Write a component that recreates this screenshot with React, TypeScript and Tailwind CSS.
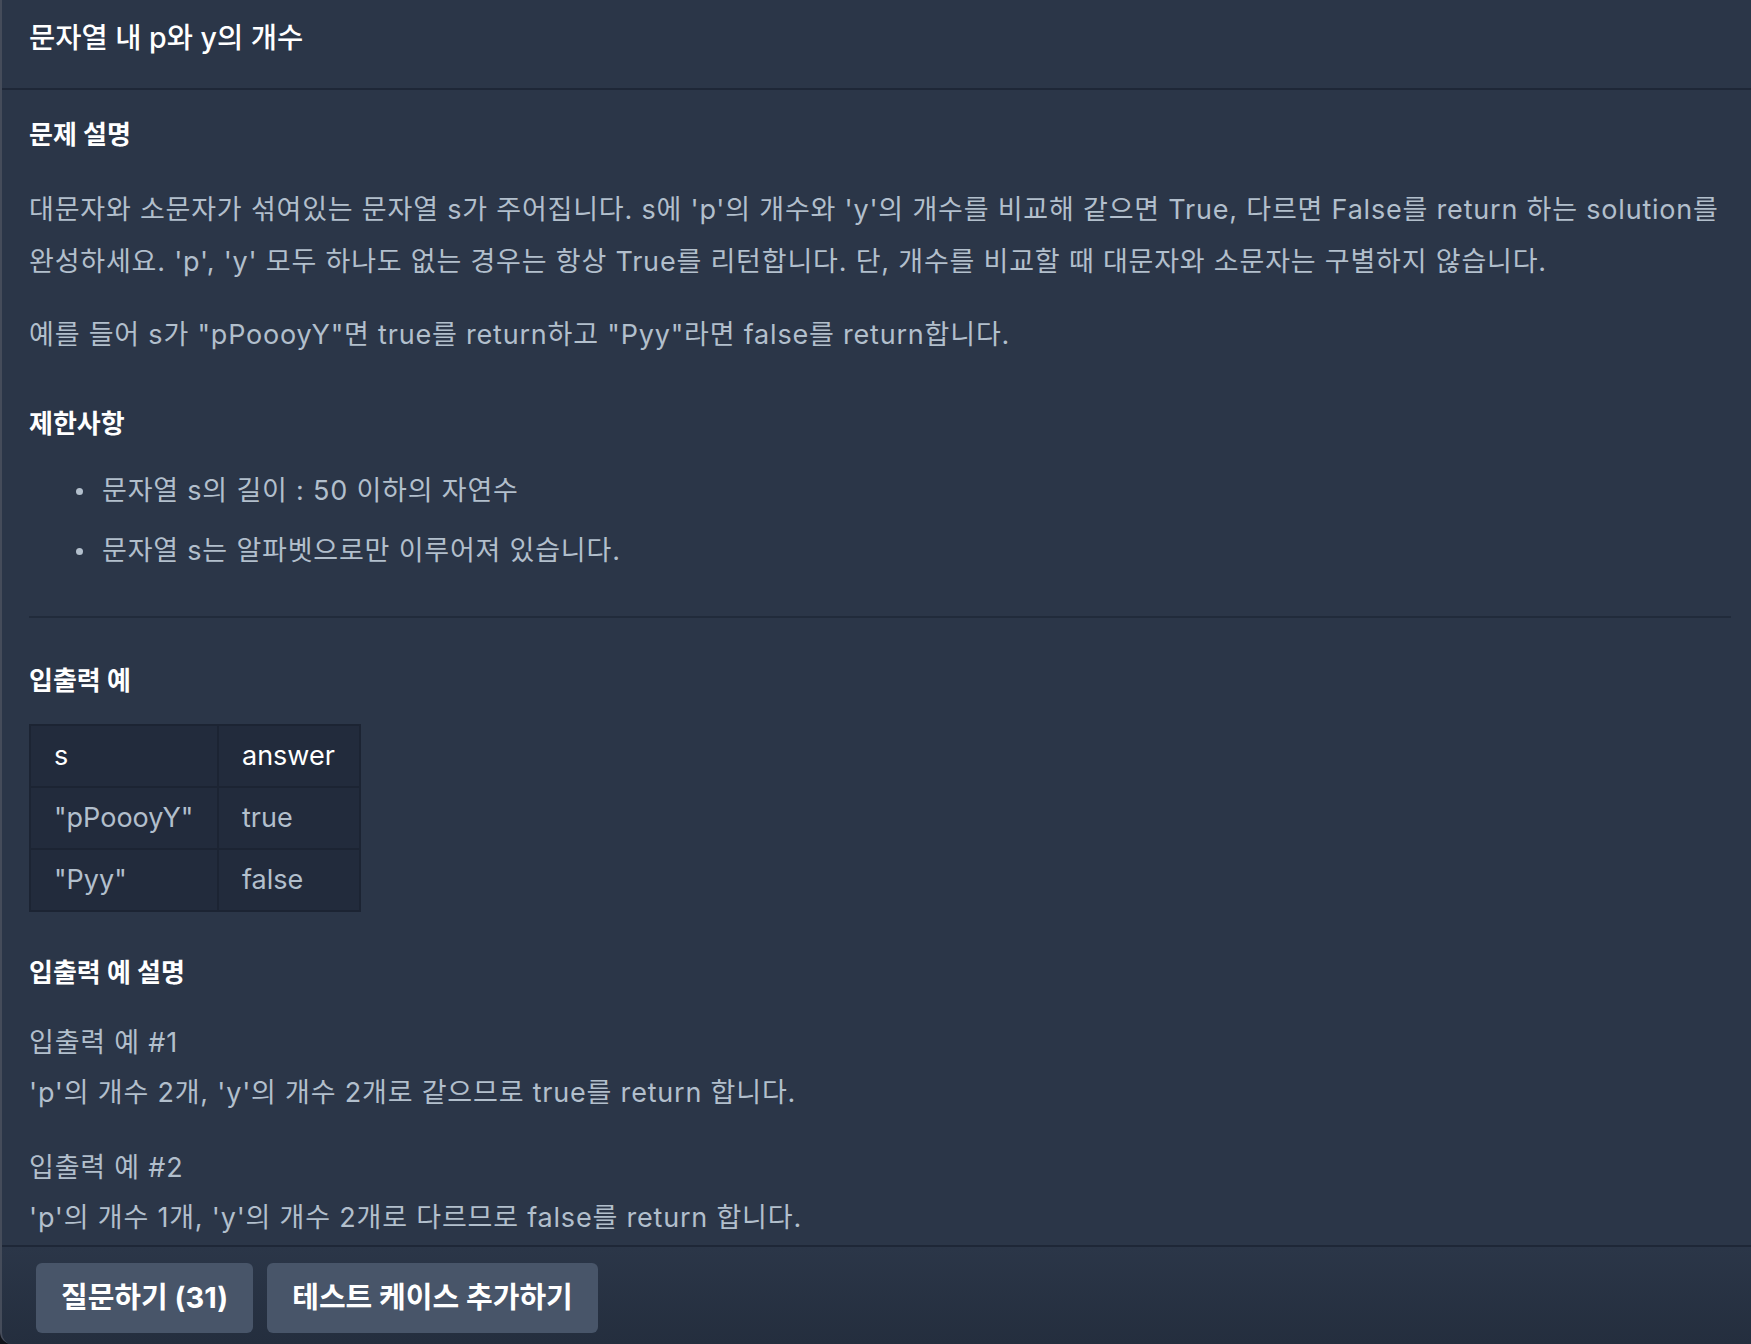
import React from "react";

const FONT = { fontFamily: 'Inter, "Noto Sans CJK KR", sans-serif' };

export default function App() {
  return (
    <div className="w-[1751px] h-[1344px] bg-[#10131a] overflow-hidden" style={FONT}>
      <div className="h-[1344px] flex flex-col bg-[#2b3648] border-l-2 border-[#454c5a] rounded-bl-[12px] overflow-hidden">
        {/* Header */}
        <div className="h-[90px] shrink-0 border-b-2 border-[#1e2737] pl-[27px] pt-[19px]">
          <div className="text-[28.5px] leading-[38px] font-medium text-white">문자열 내 p와 y의 개수</div>
        </div>

        {/* Content */}
        <div className="flex-1 overflow-hidden pl-[27px] pr-[20px] text-[#b2bfcc] tracking-[0.8px]">
          <h2 className="mt-[27px] text-[26px] leading-[36px] font-bold text-white tracking-normal">문제 설명</h2>
          <p className="mt-[31px] text-[27px] leading-[52px]">
            대문자와 소문자가 섞여있는 문자열 s가 주어집니다. s에 'p'의 개수와 'y'의 개수를 비교해 같으면 True, 다르면 False를 return 하는 solution를 완성하세요. 'p', 'y' 모두 하나도 없는 경우는 항상 True를 리턴합니다. 단, 개수를 비교할 때 대문자와 소문자는 구별하지 않습니다.
          </p>
          <p className="mt-[21px] text-[27px] leading-[52px]">
            예를 들어 s가 "pPoooyY"면 true를 return하고 "Pyy"라면 false를 return합니다.
          </p>

          <h2 className="mt-[45px] text-[26px] leading-[36px] font-bold text-white tracking-normal">제한사항</h2>
          <ul className="mt-[23px] flex flex-col gap-[8px] text-[27px] leading-[52px]">
            <li className="flex items-center">
              <span className="ml-[47px] mr-[19px] w-[7px] h-[7px] rounded-full bg-[#b2bfcc]" />
              문자열 s의 길이 : 50 이하의 자연수
            </li>
            <li className="flex items-center">
              <span className="ml-[47px] mr-[19px] w-[7px] h-[7px] rounded-full bg-[#b2bfcc]" />
              문자열 s는 알파벳으로만 이루어져 있습니다.
            </li>
          </ul>

          <div className="mt-[39px] h-[2px] bg-[#212b3b]" />

          <h2 className="mt-[45px] text-[26px] leading-[36px] font-bold text-white tracking-normal">입출력 예</h2>
          <table className="mt-[25px] border-collapse border-2 border-[#1c2433] text-[27px] tracking-normal">
            <thead>
              <tr className="h-[62px] bg-[#222b3c]">
                <th className="w-[188px] px-[23px] text-left font-normal text-white border-2 border-[#1c2433]">s</th>
                <th className="w-[142px] px-[23px] text-left font-normal text-white border-2 border-[#1c2433]">answer</th>
              </tr>
            </thead>
            <tbody>
              <tr className="h-[62px] bg-[#222b3c]">
                <td className="px-[23px] border-2 border-[#1c2433] whitespace-nowrap">"pPoooyY"</td>
                <td className="px-[23px] border-2 border-[#1c2433]">true</td>
              </tr>
              <tr className="h-[62px] bg-[#222b3c]">
                <td className="px-[23px] border-2 border-[#1c2433]">"Pyy"</td>
                <td className="px-[23px] border-2 border-[#1c2433]">false</td>
              </tr>
            </tbody>
          </table>

          <h2 className="mt-[43px] text-[26px] leading-[36px] font-bold text-white tracking-normal">입출력 예 설명</h2>
          <p className="mt-[27px] text-[27px] leading-[50px]">
            입출력 예 #1
            <br />
            'p'의 개수 2개, 'y'의 개수 2개로 같으므로 true를 return 합니다.
          </p>
          <p className="mt-[25px] text-[27px] leading-[50px]">
            입출력 예 #2
            <br />
            'p'의 개수 1개, 'y'의 개수 2개로 다르므로 false를 return 합니다.
          </p>
        </div>

        {/* Footer */}
        <div className="h-[99px] shrink-0 border-t-2 border-[#1e2737] bg-gradient-to-b from-[#2b3648] to-[#242e3e] pl-[34px] pt-[16px] flex gap-[14px] items-start">
          <button className="h-[70px] px-[25px] rounded-[6px] bg-[#485569] text-white text-[29px] font-bold">질문하기 (31)</button>
          <button className="h-[70px] px-[25px] rounded-[6px] bg-[#485569] text-white text-[29px] font-bold">테스트 케이스 추가하기</button>
        </div>
      </div>
    </div>
  );
}
